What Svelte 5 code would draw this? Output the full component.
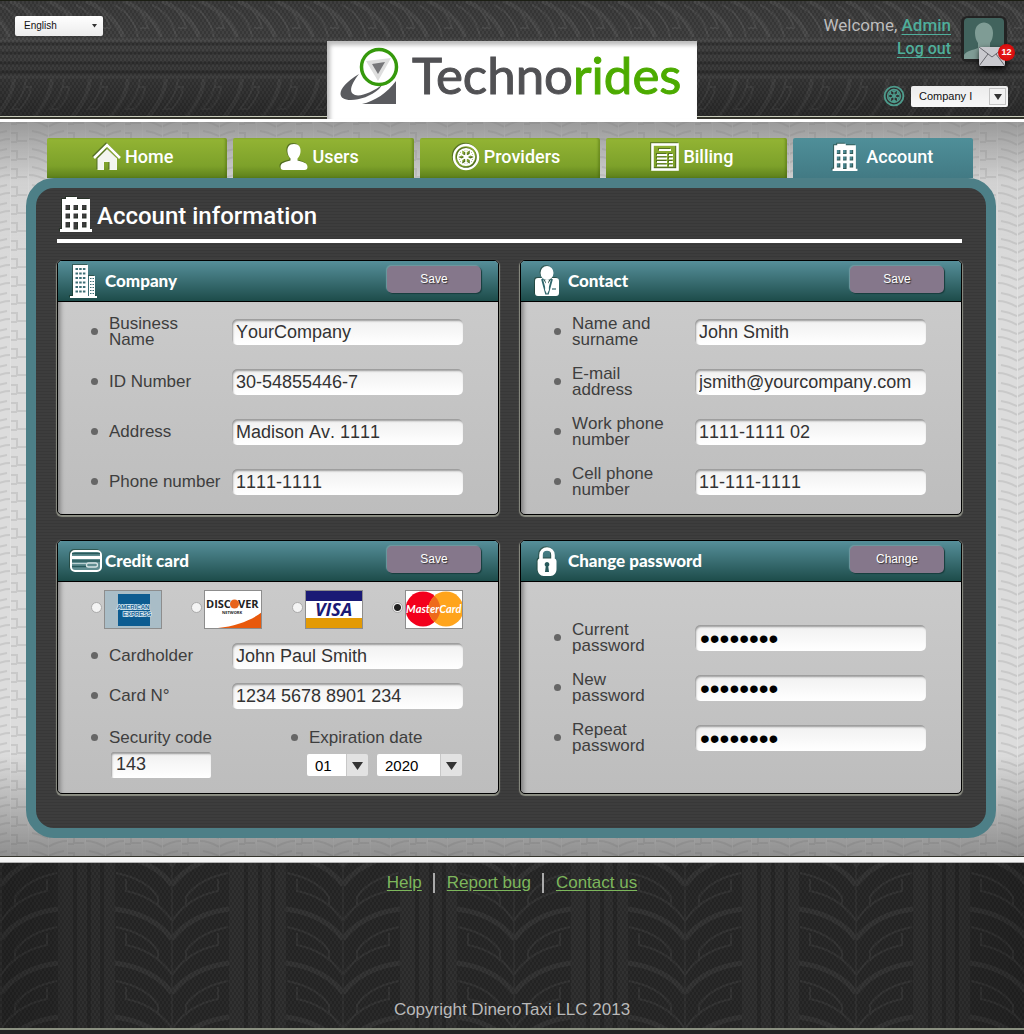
<script>
  const tabs = [
    { label: 'Home', icon: 'home' },
    { label: 'Users', icon: 'user' },
    { label: 'Providers', icon: 'wheel' },
    { label: 'Billing', icon: 'bill' },
    { label: 'Account', icon: 'building', active: true }
  ];

  const company = [
    { id: 'business', label: 'Business\nName', value: 'YourCompany' },
    { id: 'idnumber', label: 'ID Number', value: '30-54855446-7' },
    { id: 'address', label: 'Address', value: 'Madison Av. 1111' },
    { id: 'phone', label: 'Phone number', value: '1111-1111' }
  ];

  const contact = [
    { id: 'fullname', label: 'Name and\nsurname', value: 'John Smith' },
    { id: 'email', label: 'E-mail\naddress', value: 'jsmith@yourcompany.com' },
    { id: 'work', label: 'Work phone\nnumber', value: '1111-1111 02' },
    { id: 'cell', label: 'Cell phone\nnumber', value: '11-111-1111' }
  ];

  const card = [
    { id: 'holder', label: 'Cardholder', value: 'John Paul Smith' },
    { id: 'number', label: 'Card N°', value: '1234 5678 8901 234' }
  ];

  const passwords = [
    { id: 'current', label: 'Current\npassword', value: 'password', type: 'password' },
    { id: 'new', label: 'New\npassword', value: 'password', type: 'password' },
    { id: 'repeat', label: 'Repeat\npassword', value: 'password', type: 'password' }
  ];

  const brands = ['American Express', 'Discover', 'Visa', 'MasterCard'];
  const spokes = [0, 60, 120, 180, 240, 300];
  let brand = $state('MasterCard');
</script>

{#snippet wheel()}
  <circle cx="14" cy="14" r="12" fill="none" stroke="currentColor" stroke-width="2.4" />
  <circle cx="14" cy="14" r="8.2" fill="none" stroke="currentColor" stroke-width="1.8" />
  <circle cx="14" cy="14" r="2.4" fill="currentColor" />
  {#each spokes as a}
    <path d="M14 14V6M14 9l-3-2M14 9l3-2" fill="none" stroke="currentColor" stroke-width="1.5" transform="rotate({a} 14 14)" />
  {/each}
{/snippet}

{#snippet icon(name)}
  {#if name === 'home'}
    <svg class="icon" width="28" height="28" viewBox="0 0 28 28" aria-hidden="true">
      <path d="M1 15 14 2l13 13" fill="none" stroke="currentColor" stroke-width="2.6" />
      <path d="M14 6 4.5 15.500V27H11v-8h5.500v8h7.500V15.500z" fill="currentColor" opacity=".93" />
    </svg>
  {:else if name === 'user'}
    <svg class="icon" width="28" height="28" viewBox="0 0 28 28" aria-hidden="true">
      <path d="M14 1c5 0 7 3.500 6.500 8-.3 3-1.500 5-3 6.500v2c5 1.500 10 2 10 6.500 0 2-1 3-3 3h-21c-2 0-3-1-3-3 0-4.500 5-5 10-6.500v-2C9 14 7.800 12 7.500 9 7 4.500 9 1 14 1z" fill="currentColor" />
    </svg>
  {:else if name === 'wheel'}
    <svg class="icon" width="28" height="28" viewBox="0 0 28 28" aria-hidden="true">{@render wheel()}</svg>
  {:else if name === 'bill'}
    <svg class="icon" width="28" height="28" viewBox="0 0 28 28" aria-hidden="true">
      <rect x="1.500" y="1.500" width="25" height="25" fill="none" stroke="currentColor" stroke-width="2.600" />
      <path d="M8 7h12M6 12h10M6 15.500h10M6 19h10M6 22.500h10M18 12h4M18 15.500h4M18 19h4M18 22.500h4" stroke="currentColor" stroke-width="2" />
    </svg>
  {:else if name === 'building'}
    <svg class="icon tower" viewBox="0 0 32 36" aria-hidden="true">
      <path fill="currentColor" fill-rule="evenodd" d="M2 3h4V1h11v2h13v30h2v3H0v-3h2zM5.500 9v5H10V9zm8 0v5H18V9zm8.500 0v5h4.500V9zM5.500 17.500v5H10v-5zm8 0v5H18v-5zm8.500 0v5h4.500v-5zM5.500 26v5.500H10V26zm8 0v7.500H18V26zm8.500 0v5.500h4.500V26z" />
    </svg>
  {:else if name === 'company'}
    <svg class="icon" width="28" height="34" viewBox="0 0 28 34" aria-hidden="true">
      <path fill="currentColor" d="M3 1h15v11h7v20h2v2H0v-2h3V1z" />
      <path d="M5.500 5h10M5.500 9.500h10M5.500 14h10M5.500 18.500h10M5.500 23h10M5.500 27.500h10" stroke="#3d6f76" stroke-width="2" stroke-dasharray="2.500 1.200" />
      <path d="M20 14.500h4M20 17.500h4M20 20.500h4M20 23.500h4M20 26.500h4M20 29.500h4" stroke="#3d6f76" stroke-dasharray="1.500 1" />
      <path d="M18.500 12v20" stroke="#3d6f76" stroke-width="1" />
    </svg>
  {:else if name === 'contact'}
    <svg class="icon" width="28" height="30" viewBox="0 0 28 30" aria-hidden="true">
      <ellipse cx="14" cy="7" rx="6.500" ry="7" fill="currentColor" />
      <path fill="currentColor" d="M5 12h4l5 7 5-7h4c2 0 3 1 3 3v12c0 2-1 3-3 3H5c-2 0-3-1-3-3V15c0-2 1-3 3-3z" />
      <path d="M9 13l4 14.500h2L19 13" fill="none" stroke="#2f666c" stroke-width="1.800" />
      <path d="M12 14h4l-1 3 1 7-2 4-2-4 1-7z" fill="currentColor" />
      <path d="M19 23h4" stroke="#2f666c" stroke-width="1.200" />
    </svg>
  {:else if name === 'card'}
    <svg class="icon" width="32" height="22" viewBox="0 0 32 22" aria-hidden="true">
      <rect x="1" y="1" width="30" height="20" rx="4" fill="#5f8c90" stroke="currentColor" stroke-width="2" />
      <path d="M2 3.500h28" stroke="#28595b" stroke-width="1.500" />
      <path d="M2 7.500h28" stroke="currentColor" stroke-width="3" />
      <path d="M2 11h28M2 16.500h14" stroke="#28595b" stroke-width="1.500" />
      <path d="M2 13.500h14" stroke="#b9cfd1" />
      <rect x="16.500" y="13" width="11" height="4" rx="2" fill="none" stroke="#d5e2e3" stroke-width="1.300" />
    </svg>
  {:else if name === 'lock'}
    <svg class="icon" width="28" height="30" viewBox="0 0 28 30" aria-hidden="true">
      <path d="M8 14V9c0-8 12-8 12 0v5" fill="none" stroke="currentColor" stroke-width="3.600" />
      <path d="M6 12.500h16c2 0 3 1 3 3V23c0 4-3 7-7 7h-8c-4 0-7-3-7-7v-7.500c0-2 1-3 3-3z" fill="currentColor" transform="translate(2 0) scale(.86 1)" />
      <path d="M14 16a2.400 2.400 0 0 1 1.300 4.400L16 26h-4l.7-5.600A2.400 2.400 0 0 1 14 16z" fill="#28595b" />
    </svg>
  {/if}
{/snippet}

{#snippet fields(list)}
  {#each list as f}
    <div class="field">
      <label for={f.id}>{f.label}</label>
      <input id={f.id} type={f.type ?? 'text'} value={f.value} />
    </div>
  {/each}
{/snippet}

{#snippet cardHead(name, title, action)}
  <header class="card-head">
    <span class="card-icon">{@render icon(name)}</span>
    <h2>{title}</h2>
    <button type="button">{action}</button>
  </header>
{/snippet}

<div class="page">
  <header class="top">
    <div class="lang">
      <select aria-label="Language"><option>English</option></select>
    </div>
    <div class="logo">
      <svg width="62" height="60" viewBox="0 0 62 60" aria-hidden="true">
        <path d="M20 27C-2 40-4 53 12 53c9 0 20-4 28-11l4-5c-10 8-22 13-28 11-7-2-4-11 4-21z" fill="#5a5b5f" />
        <path d="M57 34v23H23c13-3 25-11 34-23z" fill="#5a5b5f" />
        <circle cx="40" cy="20" r="17.500" fill="#fff" stroke="#35990c" stroke-width="3.500" />
        <path d="m27 14 25-3-13 23z" fill="#dedede" />
        <path d="m33 17 13-2-7 12z" fill="#77777a" />
      </svg>
      <h1>Techno<span>rides</span></h1>
    </div>
    <div class="session">
      <div class="who">
        <div class="hello">
          <p>Welcome, <a href="#admin">Admin</a></p>
          <a class="out" href="#logout">Log out</a>
        </div>
        <a class="avatar" href="#messages" aria-label="Messages">
          <svg width="46" height="46" viewBox="0 0 46 46" aria-hidden="true">
            <rect width="46" height="46" rx="6" fill="#232323" />
            <rect x="3" y="2" width="40" height="41" rx="4" fill="#41635d" />
            <path d="M3 43v-4c2-4 9-5 14-7v-5c-2-3-3-6-3-10 0-14 18-14 18 0 0 4-1 7-3 10v5c5 2 12 3 14 6v1c0 2-2 4-4 4z" fill="#7f9c95" />
          </svg>
          <svg class="mail" width="26" height="19" viewBox="0 0 26 19" aria-hidden="true">
            <rect width="26" height="19" fill="#c9c9ce" />
            <path d="M0 0l13 10L26 0M0 19l9-12M26 19 17 7" fill="none" stroke="#66666c" />
          </svg>
          <span class="badge">12</span>
        </a>
      </div>
      <div class="company">
        <svg width="22" height="22" viewBox="0 0 28 28" aria-hidden="true">{@render wheel()}</svg>
        <select aria-label="Company"><option>Company I</option></select>
      </div>
    </div>
  </header>

  <main>
    <nav>
      {#each tabs as t}
        <a href="#{t.icon}" class:active={t.active}>{@render icon(t.icon)}<span>{t.label}</span></a>
      {/each}
    </nav>
    <section class="panel">
      <div class="title">{@render icon('building')}<h2>Account information</h2></div>
      <div class="cards">
        <form class="card">
          {@render cardHead('company', 'Company', 'Save')}
          <div class="body">{@render fields(company)}</div>
        </form>
        <form class="card">
          {@render cardHead('contact', 'Contact', 'Save')}
          <div class="body">{@render fields(contact)}</div>
        </form>
        <form class="card">
          {@render cardHead('card', 'Credit card', 'Save')}
          <div class="body pay">
            <div class="brands">
              {#each brands as b}
                <label>
                  <input type="radio" name="brand" value={b} bind:group={brand} aria-label={b} />
                  <svg width="58" height="39" viewBox="0 0 58 39" aria-hidden="true">
                    {#if b === 'American Express'}
                      <rect width="58" height="39" fill="#a9bdc7" />
                      <rect x="14" y="4" width="32" height="32" fill="#0c5c91" />
                      <g fill="#0c5c91" stroke="#dcebf3" stroke-width="1.500" paint-order="stroke" font-family="Liberation Sans" font-weight="bold" font-size="6">
                        <text x="13" y="19">AMERICAN</text>
                        <text x="19" y="26">EXPRESS</text>
                      </g>
                    {:else if b === 'Discover'}
                      <rect width="58" height="39" fill="#fff" />
                      <path d="M14 38c18-2 34-8 44-16v16z" fill="#e8590c" />
                      <circle cx="30.500" cy="14" r="4.500" fill="#e8641c" />
                      <g fill="#222" font-family="Open Sans" font-weight="bold">
                        <text x="2" y="18" font-size="11">DISC</text>
                        <text x="34" y="18" font-size="11">VER</text>
                        <text x="18" y="24" font-size="4">NETWORK</text>
                      </g>
                    {:else if b === 'Visa'}
                      <rect width="58" height="39" fill="#fff" />
                      <rect width="58" height="11" fill="#1a1a75" />
                      <rect y="28" width="58" height="11" fill="#e39a04" />
                      <text x="10" y="26" fill="#1a1a75" font-family="Open Sans" font-weight="bold" font-style="italic" font-size="18">VISA</text>
                    {:else}
                      <rect width="58" height="39" fill="#fff" />
                      <circle cx="18" cy="19" r="17.500" fill="#f3001c" />
                      <circle cx="41" cy="19" r="17.500" fill="#ffa41c" />
                      <path d="M29.500 6a17.500 17.500 0 0 0 0 26 17.500 17.500 0 0 0 0-26z" fill="#ee6a1c" />
                      <text x="1" y="23" fill="#fff" font-family="Lato" font-weight="bold" font-style="italic" font-size="11">MasterCard</text>
                    {/if}
                    <rect x=".5" y=".5" width="57" height="38" fill="none" stroke="#8d8d8d" />
                  </svg>
                </label>
              {/each}
            </div>
            {@render fields(card)}
            <div class="extra">
              <div>
                <label for="code">Security code</label>
                <input id="code" type="text" value="143" />
              </div>
              <div>
                <label for="month">Expiration date</label>
                <div class="dates">
                  <select id="month"><option>01</option></select>
                  <select aria-label="Year"><option>2020</option></select>
                </div>
              </div>
            </div>
          </div>
        </form>
        <form class="card">
          {@render cardHead('lock', 'Change password', 'Change')}
          <div class="body secret">{@render fields(passwords)}</div>
        </form>
      </div>
    </section>
  </main>

  <footer>
    <div class="links">
      <a href="#help">Help</a>
      <a href="#bug">Report bug</a>
      <a href="#contact">Contact us</a>
    </div>
    <p>Copyright DineroTaxi LLC 2013</p>
  </footer>
</div>

<style>
  :global(body) {
    background: #252525;
  }
  .page {
    min-height: 100vh;
    display: flex;
    flex-direction: column;
    font-family: 'Liberation Sans', Arial, sans-serif;
    --mesh: url("data:image/svg+xml,%3Csvg xmlns='http://www.w3.org/2000/svg' width='4' height='6'%3E%3Cpath d='M0 0h2v3H0zM2 3h2v3H2z' fill='%23000' fill-opacity='.16'/%3E%3C/svg%3E");
  }
  h1, h2, p {
    margin: 0;
    font-weight: normal;
  }
  select {
    appearance: none;
    border: 0;
    border-radius: 2px;
    color: #111;
    font-family: 'Liberation Sans', Arial, sans-serif;
  }

  .top {
    display: grid;
    grid-template-columns: 1fr 370px 1fr;
    height: 116px;
    box-sizing: border-box;
    border-top: 1px solid #1b1e14;
    background:
      var(--mesh),
      linear-gradient(rgba(0, 0, 0, .08), rgba(0, 0, 0, 0) 40%, rgba(0, 0, 0, .35)),
      url("data:image/svg+xml,%3Csvg xmlns='http://www.w3.org/2000/svg' width='38' height='118'%3E%3Crect width='38' height='118' fill='%23434343'/%3E%3Cg fill='none' stroke='%23505050' stroke-width='2'%3E%3Cpath d='M-28 0Q2 14 9 36M10 0Q40 14 47 36' stroke-width='4'/%3E%3Cpath d='M-4 2Q20 12 24 36M18 2Q31 14 34 27H26'/%3E%3Cpath d='M14 78Q12 98-4 116M52 78Q50 98 34 116' stroke-width='4'/%3E%3Cpath d='M26 78Q24 96 12 108H20Q30 98 31 86H24'/%3E%3C/g%3E%3Cpath d='M0 39h38M0 76h38' stroke='%234c4c4c' stroke-width='3'/%3E%3Cpath d='M0 43h38M0 52h38M0 62h38M0 71h38' stroke='%23353535' stroke-width='3'/%3E%3C/svg%3E") 0 0 repeat-x;
  }
  .lang {
    padding: 14px 15px;
  }
  .lang select {
    width: 88px;
    height: 20px;
    padding: 0 9px;
    font-size: 10px;
    background:
      url("data:image/svg+xml,%3Csvg xmlns='http://www.w3.org/2000/svg' width='5' height='4'%3E%3Cpath d='M0 0h5L2.5 3.500z' fill='%23333'/%3E%3C/svg%3E") right 6px center no-repeat,
      linear-gradient(#fff, #ececec);
  }
  .logo {
    position: relative;
    z-index: 1;
    margin: 40px 0 -3px;
    padding: 0 0 7px 12px;
    display: flex;
    align-items: center;
    gap: 11px;
    background: #fff;
    box-shadow: inset 3px 4px 4px #bbb;
  }
  h1 {
    padding-bottom: 4px;
    color: #515154;
    font: 51px/60px Lato, sans-serif;
    -webkit-text-stroke: 1px currentColor;
  }
  h1 span {
    color: #4cab00;
  }
  .session {
    padding: 13px 16px 0 0;
    display: flex;
    flex-direction: column;
    align-items: flex-end;
    font-family: Roboto, sans-serif;
  }
  .who {
    display: flex;
    gap: 10px;
    margin-right: 1px;
  }
  .hello {
    color: #bdbdbd;
    font-size: 17px;
    line-height: 23px;
    text-align: right;
  }
  .hello a {
    color: #4fae9b;
    font-weight: 500;
    text-underline-offset: 3px;
    text-decoration-thickness: 1px;
  }
  .hello .out {
    font-size: 16px;
  }
  .avatar {
    position: relative;
    height: 46px;
    margin-top: 2px;
  }
  .mail {
    position: absolute;
    left: 18px;
    top: 31px;
    filter: drop-shadow(1px 3px 3px #000);
  }
  .badge {
    position: absolute;
    left: 37px;
    top: 28px;
    width: 17px;
    border-radius: 9px;
    background: radial-gradient(#e22, #c00);
    color: #fff;
    font: bold 9px/17px 'Liberation Sans', sans-serif;
    text-align: center;
  }
  .company {
    display: flex;
    align-items: center;
    gap: 6px;
    margin-top: 23px;
    color: #4e9c8d;
  }
  .company select {
    width: 97px;
    height: 21px;
    padding: 0 8px;
    font-size: 11px;
    background:
      url("data:image/svg+xml,%3Csvg xmlns='http://www.w3.org/2000/svg' width='17' height='17'%3E%3Crect x='.5' y='.5' width='16' height='16' fill='%23f2f2f2' stroke='%23c4c4c4'/%3E%3Cpath d='M5 6h8l-4 6z' fill='%23333'/%3E%3C/svg%3E") right 2px center no-repeat,
      linear-gradient(#ececec, #f8f8f8);
  }

  main {
    padding: 16px 28px 18px 26px;
    border-top: 6px solid #fff;
    border-image: linear-gradient(#c9ccba 0 1px, #34342c 1px 3px, #fff 3px) 6 0 0 / 6px 0 0;
    background:
      linear-gradient(rgba(110, 110, 110, .6), rgba(150, 150, 150, .15) 60px, rgba(0, 0, 0, 0) 160px),
      linear-gradient(rgba(0, 0, 0, 0) 86%, rgba(80, 80, 80, .55)),
      url("data:image/svg+xml,%3Csvg xmlns='http://www.w3.org/2000/svg' width='57' height='18'%3E%3Crect width='57' height='18' fill='%23dcdcdc'/%3E%3Cg fill='none' stroke='%23c9c9c9' stroke-width='2'%3E%3Cpath d='M0 17Q10 11 19 11M57 17Q47 11 38 11M0 8Q8 4 16 3M57 8Q49 4 41 3M0-1Q10-7 19-7M20 5h6v8h10M20 14h6'/%3E%3C/g%3E%3Cpath d='M19.500 0v18M37.500 0v18M0.500 0v18' stroke='%23e2e2e2'/%3E%3C/svg%3E") -9px 6px;
  }
  nav {
    display: grid;
    grid-template-columns: repeat(5, 1fr);
    gap: 6px;
    padding: 0 23px 0 21px;
  }
  nav a {
    height: 40px;
    box-sizing: border-box;
    padding: 0 8px 2px 0;
    display: flex;
    align-items: center;
    justify-content: center;
    gap: 4px;
    border-radius: 2px 2px 0 0;
    background: linear-gradient(#93b434, #7da12a 70%, #5c7f1b);
    box-shadow: inset -2px 0 2px rgba(50, 80, 0, .3);
    color: #fff;
    font: 500 18px/24px Roboto, sans-serif;
    text-decoration: none;
  }
  nav a.active {
    padding-right: 0;
    gap: 8px;
    background: linear-gradient(#4f8f99, #427a84);
    box-shadow: none;
  }
  .icon {
    display: block;
    filter: drop-shadow(-1px -1px 0 rgba(20, 40, 20, .45));
  }
  .tower {
    width: 26px;
    height: 28px;
  }
  .panel {
    border: 10px solid #4d7f87;
    border-radius: 28px;
    padding: 8px 24px 34px 21px;
    background: repeating-linear-gradient(#3d3d3d 0 2px, #383838 2px 3px);
  }
  .title {
    display: flex;
    align-items: flex-start;
    gap: 5px;
    height: 43px;
    padding: 0 0 0 3px;
    border-bottom: 4px solid #fff;
    color: #fff;
  }
  .title .tower {
    width: 32px;
    height: 36px;
  }
  .title h2 {
    padding-top: 4px;
    font: 500 24px/32px Roboto, sans-serif;
  }
  .cards {
    display: grid;
    grid-template-columns: 1fr 1fr;
    gap: 25px 21px;
    margin-top: 17px;
  }
  .card {
    min-width: 0;
    border: 1px solid #000;
    border-radius: 5px;
    overflow: hidden;
    background: linear-gradient(#cdcdcd, #bdbdbd);
    box-shadow: 0 1px 1px 1px #8d8f84;
  }
  .card-head {
    display: flex;
    align-items: flex-start;
    height: 40px;
    padding-right: 17px;
    border-bottom: 1px solid #000;
    background: linear-gradient(#568f9a, #1d4c4a);
    color: #fff;
  }
  .card-icon {
    width: 47px;
    height: 40px;
    padding-left: 12px;
    box-sizing: border-box;
    display: flex;
    align-items: center;
  }
  .card-head h2 {
    flex: 1;
    font: 900 17px/40px Lato, sans-serif;
  }
  .card-head button {
    width: 94px;
    height: 27px;
    margin-top: 5px;
    padding: 0;
    border: 0;
    border-radius: 5px;
    background: #85778b;
    box-shadow: 1px 1px 1px #173c3c, -1px -1px 1px #6f9aa0;
    color: #fff;
    font: 12px/27px 'Liberation Sans', sans-serif;
    text-shadow: 1px 1px 1px #333;
  }
  .body {
    height: 207px;
    padding: 5px 35px 0 33px;
    box-shadow: inset 6px 0 5px -4px #777;
    font-kerning: none;
  }
  .field {
    display: grid;
    grid-template-columns: 141px minmax(0, 1fr);
    align-items: center;
    height: 50px;
  }
  .field label,
  .extra label {
    position: relative;
    padding-left: 18px;
    color: #3e3e3e;
    font-size: 17px;
    line-height: 16px;
    white-space: pre-line;
  }
  .field label::before,
  .extra label::before {
    content: '';
    position: absolute;
    left: 0;
    top: calc(50% - 4px);
    width: 7px;
    height: 7px;
    border-radius: 50%;
    background: #666;
  }
  .field input,
  .extra input {
    width: 100%;
    height: 26px;
    box-sizing: border-box;
    border: 0;
    border-radius: 5px;
    padding: 0 4px;
    background: linear-gradient(#f0f0f0, #fff);
    box-shadow: inset 1px 2px 2px #999;
    color: #333;
    font: 18px/24px 'Liberation Sans', sans-serif;
    font-kerning: none;
  }
  .field input[type='password'] {
    padding: 2px 5px 0;
    color: #000;
    font-size: 28px;
  }
  .secret {
    padding-top: 31px;
    height: 180px;
  }
  .pay {
    padding-top: 8px;
    height: 203px;
  }
  .brands {
    display: flex;
    justify-content: space-between;
    margin-bottom: 7px;
  }
  .brands label {
    display: flex;
    align-items: center;
    gap: 2px;
  }
  .brands input {
    appearance: none;
    width: 11px;
    height: 11px;
    margin: 0 0 4px;
    border: 1px solid #aaa;
    border-radius: 50%;
    background: #f4f4f4;
  }
  .brands input:checked {
    background: radial-gradient(circle, #222 0 3px, #f4f4f4 4px);
  }
  .pay .field {
    height: 40px;
  }
  .extra {
    display: flex;
    justify-content: space-between;
    padding-top: 14px;
  }
  .extra label {
    display: block;
  }
  .extra > div:last-child {
    width: 172px;
  }
  .extra input {
    width: 100px;
    margin: 6px 0 0 20px;
    border-radius: 2px;
    padding: 0 5px 2px;
  }
  .dates {
    display: flex;
    gap: 9px;
    margin: 8px 0 0 16px;
  }
  .dates select {
    width: 61px;
    height: 22px;
    padding: 0 8px;
    color: #000;
    font-size: 15px;
    background:
      url("data:image/svg+xml,%3Csvg xmlns='http://www.w3.org/2000/svg' width='22' height='22'%3E%3Crect width='22' height='22' fill='%23e2e2e2'/%3E%3Cpath d='M.5 0v22' stroke='%23c8c8c8'/%3E%3Cpath d='M6 8h11l-5.500 8z' fill='%23333'/%3E%3C/svg%3E") right center no-repeat,
      #fff;
  }
  .dates select:last-child {
    width: 85px;
  }

  footer {
    flex: 1;
    display: flex;
    flex-direction: column;
    align-items: center;
    justify-content: space-between;
    gap: 40px;
    padding: 10px 0 8px;
    border-top: 7px solid #fff;
    border-bottom: 6px solid #222;
    border-image: linear-gradient(#34342c 0 1px, #f4f4f4 1px 6px, #b0b0b0 6px 7px, #222 7px, #222 calc(100% - 6px), #8a9080 calc(100% - 6px), #8a9080 calc(100% - 4px), #222 calc(100% - 4px)) 7 0 6 / 7px 0 6px;
    background:
      var(--mesh),
      linear-gradient(90deg, rgba(0, 0, 0, .15), rgba(0, 0, 0, 0) 12% 88%, rgba(0, 0, 0, .15)),
      url("data:image/svg+xml,%3Csvg xmlns='http://www.w3.org/2000/svg' width='171' height='54'%3E%3Crect width='171' height='54' fill='%232a2a2a'/%3E%3Crect width='57' height='54' fill='%23313131'/%3E%3Cpath d='M17 0v54M31 0v54M44 0v54' stroke='%23292929' stroke-width='4'/%3E%3Cpath d='M114 0v54' stroke='%23323232' stroke-width='2'/%3E%3Cg fill='none' stroke='%23363636' stroke-width='2'%3E%3Cg%3E%3Cpath d='M57 46Q95 51 114 76M57-8Q95-3 114 22' stroke-width='5'/%3E%3Cpath d='M58 10Q88 16 100 34V44M68 16V28Q98 34 114 58M68-26Q98-20 114 4'/%3E%3C/g%3E%3Cg transform='matrix(-1 0 0 1 228 0)'%3E%3Cpath d='M57 46Q95 51 114 76M57-8Q95-3 114 22' stroke-width='5'/%3E%3Cpath d='M58 10Q88 16 100 34V44M68 16V28Q98 34 114 58M68-26Q98-20 114 4'/%3E%3C/g%3E%3C/g%3E%3C/svg%3E") 58px 0 #272727;
    color: #b9b9b9;
    font-size: 17px;
    line-height: 20px;
  }
  .links {
    display: flex;
  }
  .links a {
    color: #7db65c;
    text-underline-offset: 2px;
  }
  .links a + a {
    margin-left: 11px;
    padding-left: 12px;
    border-left: 2px solid #aaa;
  }
</style>
